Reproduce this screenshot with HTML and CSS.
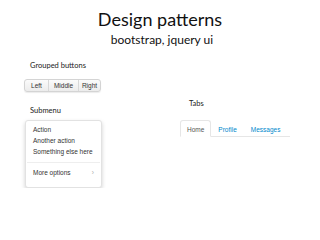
FILE: index.html
```html
<!DOCTYPE html>
<html lang="en">

<head>
    <meta charset="UTF-8" />
    <title>Design patterns</title>
    <link rel="stylesheet" href="styles.css">
</head>

<body>

    <header class="header">
        <h1 class="title">Design patterns</h1>
        <p class="subtitle">bootstrap, jquery ui</p>
    </header>

    <div class="columns">
        <section class="col left">
            <h2 class="label">Grouped buttons</h2>
            <div class="btn-group">
                <button class="btn">Left</button>
                <button class="btn">Middle</button>
                <button class="btn">Right</button>
            </div>

            <h2 class="label submenu-label">Submenu</h2>
            <ul class="dropdown">
                <li><a href="#">Action</a></li>
                <li><a href="#">Another action</a></li>
                <li><a href="#">Something else here</a></li>
                <li class="divider"></li>
                <li class="has-sub"><a href="#">More options <span class="caret">›</span></a></li>
            </ul>
        </section>

        <section class="col right">
            <h2 class="label">Tabs</h2>
            <ul class="tabs">
                <li class="active"><a href="#">Home</a></li>
                <li><a href="#">Profile</a></li>
                <li><a href="#">Messages</a></li>
            </ul>
        </section>
    </div>

</body>

</html>
```

FILE: styles.css
```css
* {
    box-sizing: border-box;
}

body {
    margin: 0;
    background: #fff;
    font-family: Lato, "Open Sans", sans-serif;
    color: #111;
}

.header {
    text-align: center;
    padding-top: 8px;
}

.title {
    margin: 0;
    font-size: 18px;
    font-weight: normal;
    line-height: 22px;
}

.subtitle {
    margin: 0;
    font-size: 12px;
    line-height: 16px;
    padding-top: 2px;
    padding-left: 4px;
}

.columns {
    display: flex;
}

.col.left {
    width: 158px;
    padding-left: 24px;
    padding-top: 12px;
}

.col.right {
    padding-left: 25px;
    padding-top: 50px;
}

.label {
    margin: 0 0 0 6px;
    font-size: 7.5px;
    font-weight: normal;
    line-height: 12px;
    color: #222;
}

.btn-group {
    display: inline-flex;
    margin-top: 7px;
    border: 1px solid #d4d4d4;
    border-radius: 3px;
    background: linear-gradient(#fbfbfb, #ececec);
    box-shadow: 0 1px 1px rgba(0, 0, 0, 0.08);
}

.btn {
    font-family: "Liberation Sans", Arial, sans-serif;
    font-size: 6.5px;
    color: #333;
    background: none;
    border: none;
    border-left: 1px solid #d8d8d8;
    height: 11px;
    padding: 0;
    line-height: 11px;
    text-align: center;
}

.btn:first-child {
    border-left: none;
    width: 23px;
}

.btn:nth-child(2) {
    width: 30px;
}

.btn:nth-child(3) {
    width: 22px;
}

.submenu-label {
    margin-top: 13px;
}

.dropdown {
    list-style: none;
    margin: 3px 0 0 1px;
    padding: 3px 0 9px;
    width: 77px;
    background: #fff;
    border: 1px solid #e2e2e2;
    border-radius: 3px;
    box-shadow: 0 2px 4px rgba(0, 0, 0, 0.18);
    font-family: "Liberation Sans", Arial, sans-serif;
    font-size: 6.5px;
}

.dropdown a {
    display: block;
    padding: 0 7px;
    line-height: 11px;
    color: #333;
    text-decoration: none;
}

.dropdown .divider {
    height: 1px;
    margin: 5px 1px 4px;
    background: #eee;
}

.has-sub a {
    display: flex;
    justify-content: space-between;
}

.caret {
    color: #aaa;
}

.tabs {
    list-style: none;
    display: flex;
    margin: 10px 0 0 -3px;
    padding: 0;
    width: 110px;
    border-bottom: 1px solid #e6e6e6;
    font-family: "Liberation Sans", Arial, sans-serif;
    font-size: 6.5px;
}

.tabs li {
    margin-bottom: -1px;
}

.tabs a {
    display: block;
    height: 17px;
    line-height: 17px;
    padding: 0 6px;
    border: 1px solid transparent;
    border-radius: 3px 3px 0 0;
    color: #0088cc;
    text-decoration: none;
}

.tabs .active a {
    color: #555;
    border-color: #e6e6e6;
    border-bottom-color: #fff;
    background: #fff;
}
```
